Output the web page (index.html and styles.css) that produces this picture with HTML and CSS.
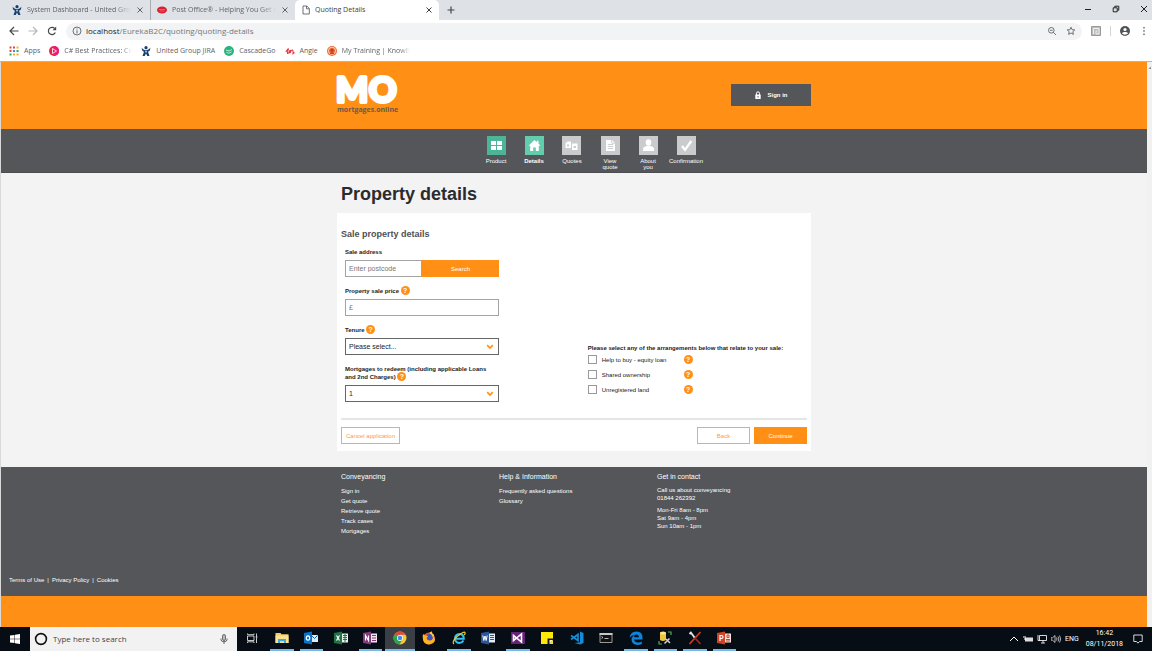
FILE: index.html
```html
<!DOCTYPE html>
<html lang="en">
<head>
<meta charset="utf-8">
<meta name="viewport" content="width=device-width, initial-scale=1">
<title>Quoting Details</title>
<link rel="stylesheet" href="styles.css">
</head>
<body>
<svg class="defs" aria-hidden="true">
  <symbol id="close" viewBox="0 0 8 8"><path d="M1.500 1.500l5 5M6.500 1.500l-5 5" stroke="currentColor"/></symbol>
  <symbol id="jira" viewBox="0 0 10 10"><circle cx="5" cy="1.700" r="1.600" fill="#17406f"/><path d="M.8 1.500C1.500 3.800 3.500 4 5 4s3.500-.2 4.200-2.500C9.500 4.500 8.500 5 7 5.800L8.500 10H6.300L5 7.600 3.700 10H1.500L3 5.800C1.500 5 .5 4.500.8 1.500z" fill="#17406f"/><circle cx="5" cy="5.600" r="1.100" fill="#a9bdd4"/></symbol>
  <symbol id="chevron" viewBox="0 0 8 6"><path d="M1.200 1.200L4 4l2.800-2.800" fill="none" stroke="#ff9015" stroke-width="1.700"/></symbol>
</svg>

<header class="browser">
  <div class="tabs">
    <div class="tab">
      <svg class="i10"><use href="#jira"/></svg>
      <span class="tab-title fade">System Dashboard - United Grou</span>
      <button class="plain" aria-label="Close tab"><svg class="i8"><use href="#close"/></svg></button>
    </div>
    <div class="tab divided">
      <svg class="i10" viewBox="0 0 10 10"><ellipse cx="5" cy="5" rx="5" ry="3.500" fill="#dc1f2e"/><path d="M2 4.500h6M2.500 6h5" stroke="#f08a90" stroke-width=".6"/></svg>
      <span class="tab-title fade">Post Office® - Helping You Get L</span>
      <button class="plain" aria-label="Close tab"><svg class="i8"><use href="#close"/></svg></button>
    </div>
    <div class="tab active">
      <svg class="i10" viewBox="0 0 10 10"><path d="M2 1h3.800L8.300 3.500V9H2zM5.500 1v2.800h2.800" fill="none" stroke="#5f6368" stroke-width=".9"/></svg>
      <span class="tab-title">Quoting Details</span>
      <button class="plain" aria-label="Close tab"><svg class="i8"><use href="#close"/></svg></button>
    </div>
    <button class="plain new-tab" aria-label="New tab"><svg class="i8" viewBox="0 0 8 8"><path d="M4 .5v7M.5 4h7" stroke="#45494d" stroke-width="1.200"/></svg></button>
    <div class="window-buttons">
      <button class="plain" aria-label="Minimise"><svg class="i8" viewBox="0 0 8 8"><path d="M1 4.500h6" stroke="#222"/></svg></button>
      <button class="plain" aria-label="Restore"><svg class="i8" viewBox="0 0 8 8"><path d="M1.200 2.800h4v4h-4zM2.800 2.500V1.200h4v4H5.500" fill="none" stroke="#222"/></svg></button>
      <button class="plain" aria-label="Close"><svg class="i8" viewBox="0 0 8 8"><path d="M1 1l6 6M7 1L1 7" stroke="#222"/></svg></button>
    </div>
  </div>
  <div class="toolbar">
    <button class="plain" aria-label="Back"><svg class="i10" viewBox="0 0 10 10"><path d="M9.500 5H1.200M5 1L1 5l4 4" fill="none" stroke="#45494d" stroke-width="1.200"/></svg></button>
    <button class="plain" aria-label="Forward"><svg class="i10" viewBox="0 0 10 10"><path d="M.5 5h8.300M5 1l4 4-4 4" fill="none" stroke="#b5b8bb" stroke-width="1.200"/></svg></button>
    <button class="plain" aria-label="Reload"><svg class="i10" viewBox="0 0 10 10"><path d="M8.300 6.400A3.600 3.600 0 1 1 7.600 2.400" fill="none" stroke="#45494d" stroke-width="1.200"/><path d="M9.200.5v3.700H5.500z" fill="#45494d"/></svg></button>
    <div class="address">
      <svg class="i10" viewBox="0 0 10 10"><circle cx="5" cy="5" r="4" fill="none" stroke="#5f6368" stroke-width=".9"/><path d="M5 4.400v3M5 2.500v1" stroke="#5f6368"/></svg>
      <span class="url">localhost<span>/EurekaB2C/quoting/quoting-details</span></span>
      <svg class="i10" viewBox="0 0 10 10"><circle cx="4.300" cy="4.300" r="2.800" fill="none" stroke="#5f6368" stroke-width=".9"/><path d="M6.300 6.300L9 9M3 4.300h2.600" stroke="#5f6368" stroke-width=".9"/></svg>
      <svg class="i10" viewBox="0 0 10 10"><path d="M5 1.200l1.100 2.500 2.700.2-2 1.800.6 2.700L5 7 2.600 8.400l.6-2.700-2-1.800 2.700-.2z" fill="none" stroke="#5f6368" stroke-width=".9"/></svg>
    </div>
    <svg class="i10" viewBox="0 0 10 10"><path d="M.5.5h9v9h-9z" fill="#bdbdbd" stroke="#999"/><path d="M2.500 8V2.500h5.500V8H5V5h1.500" fill="none" stroke="#eee"/></svg>
    <span class="rule"></span>
    <svg class="i10" viewBox="0 0 10 10"><circle cx="5" cy="5" r="5" fill="#505459"/><circle cx="5" cy="3.500" r="1.600" fill="#fff"/><path d="M1.900 7.200c1-1.600 5.200-1.600 6.200 0-1.500 1.900-4.700 1.900-6.200 0z" fill="#fff"/></svg>
    <svg class="i10" viewBox="0 0 10 10"><path d="M4.300 1h1.400v1.400H4.300zM4.300 4.300h1.400v1.400H4.300zM4.300 7.600h1.400V9H4.300z" fill="#5f6368"/></svg>
  </div>
  <nav class="bookmarks" aria-label="Bookmarks">
    <a href="#"><svg class="i10" viewBox="0 0 10 10"><path d="M.5.5h2v2h-2zM4 .5h2v2H4zM.5 4h2v2h-2z" fill="#e5483b"/><path d="M7.500.5h2v2h-2zM4 7.500h2v2H4z" fill="#f2b21b"/><path d="M4 4h2v2H4z" fill="#4285f4"/><path d="M7.500 4h2v2h-2zM.5 7.500h2v2h-2z" fill="#35a557"/><path d="M7.500 7.500h2v2h-2z" fill="#f2b21b"/></svg>Apps</a>
    <a href="#"><svg class="i10" viewBox="0 0 10 10"><circle cx="5" cy="5" r="5" fill="#e9264d"/><path d="M5 0a5 5 0 0 1 0 10z" fill="#ec1c74"/><path d="M3.500 2.500L7.500 5l-4 2.500z" fill="none" stroke="#fff" stroke-width=".8"/></svg><span class="fade mark">C# Best Practices: Co</span></a>
    <a href="#"><svg class="i10"><use href="#jira"/></svg>United Group JIRA</a>
    <a href="#"><svg class="i10" viewBox="0 0 10 10"><circle cx="5" cy="5" r="5" fill="#27b47e"/><path d="M2 4l3 1 3-1.500M2.500 6.500l2.500.7 2.500-1.200" fill="none" stroke="#bdebd8"/></svg>CascadeGo</a>
    <a href="#"><svg class="i10" viewBox="0 0 10 10"><path d="M.8 6L2.500 3.500Q4 1.500 3 4.500T2.800 7.500Q4.500 7 5 4M5.500 4L5 7Q6.500 3.500 7.500 4T8 7.500L9.500 6.500" fill="none" stroke="#e5343f" stroke-width="1.100"/></svg>Angie</a>
    <a href="#"><svg class="i10" viewBox="0 0 10 10"><circle cx="5" cy="5" r="5" fill="#ee6a30"/><circle cx="5" cy="4.800" r="3.600" fill="none" stroke="#fff" stroke-width=".7"/><circle cx="5" cy="4.300" r="1.600" fill="#b9441b"/><path d="M2.800 8c.5-2 3.900-2 4.400 0z" fill="#b9441b"/></svg><span class="fade mark">My Training | KnowBe</span></a>
  </nav>
</header>

<div class="viewport">
  <div class="page">
    <header class="brand">
      <div class="container brand-row">
        <a href="#" class="logo" aria-label="MO mortgages online">
          <svg class="logo-mark" viewBox="0 0 60 30"><text x="-1" y="27">M</text><text x="32" y="27">O</text></svg>
          <span class="logo-name">mortgages.online</span>
        </a>
        <button class="sign-in"><svg class="lock" viewBox="0 0 6 8"><path d="M1.500 4V2.300a1.500 1.500 0 0 1 3 0V4" fill="none" stroke="#fff"/><path d="M.3 3.500h5.400V8H.3z" fill="#fff"/><path d="M3 5v1.500" stroke="#55565a"/></svg>Sign in</button>
      </div>
    </header>

    <nav class="steps" aria-label="Progress">
      <ol class="container">
        <li class="done"><svg viewBox="0 0 19 19"><path d="M4 5h5v4H4zM10 5h5v4h-5zM4 10h5v4H4zM10 10h5v4h-5z" fill="#fff"/></svg>Product</li>
        <li class="current"><svg viewBox="0 0 19 19"><path d="M9.500 4L3.500 9.800h1.700V15h3v-3.500h2.600V15h3V9.800h1.700L13.500 7.800V4.800h-1.600v1.500z" fill="#fff"/></svg>Details</li>
        <li><svg viewBox="0 0 19 19"><path d="M3.500 7.500l2-2H9V12H3.500z" fill="#fff"/><path d="M10 7.500h5.500V14H10z" fill="#fff"/><path d="M5 8.500h2v2H5zM11.500 10h2.500v2h-2.500z" fill="#c9cbcc"/></svg>Quotes</li>
        <li><svg viewBox="0 0 19 19"><path d="M5 4h6l3 3v8H5z" fill="#fff"/><path d="M6.800 8.500h5.400M6.800 10.500h5.400M6.800 12.500h5.400M10.800 4v3.200H14" fill="none" stroke="#c9cbcc" stroke-width=".9"/></svg>View quote</li>
        <li><svg viewBox="0 0 19 19"><ellipse cx="9.500" cy="6.500" rx="2.800" ry="3.300" fill="#fff"/><path d="M4 15v-2.200q0-1.800 3.500-2.800h4q3.500 1 3.500 2.800V15z" fill="#fff"/></svg>About you</li>
        <li><svg viewBox="0 0 19 19"><path d="M5 10l3 3.800L14.300 5" fill="none" stroke="#fff" stroke-width="2.300"/></svg>Confirmation</li>
      </ol>
    </nav>

    <main class="container">
      <h1>Property details</h1>
      <form class="card">
        <h2>Sale property details</h2>
        <div class="columns">
          <div class="fields">
            <div class="field">
              <label for="postcode">Sale address</label>
              <div class="joined"><input id="postcode" class="control" type="text" placeholder="Enter postcode"><button type="button" class="solid">Search</button></div>
            </div>
            <div class="field">
              <label for="price">Property sale price <span class="help">?</span></label>
              <input id="price" class="control" type="text" placeholder="£">
            </div>
            <div class="field">
              <label for="tenure">Tenure <span class="help">?</span></label>
              <div class="pick"><select id="tenure" class="control"><option>Please select...</option><option>Freehold</option><option>Leasehold</option></select><svg><use href="#chevron"/></svg></div>
            </div>
            <div class="field">
              <label for="redeem">Mortgages to redeem (including applicable Loans and&nbsp;2nd Charges) <span class="help">?</span></label>
              <div class="pick"><select id="redeem" class="control"><option>1</option><option>2</option><option>3</option></select><svg><use href="#chevron"/></svg></div>
            </div>
          </div>
          <fieldset>
            <legend>Please select any of the arrangements below that relate to your sale:</legend>
            <div class="check"><input type="checkbox" id="help-buy"><label for="help-buy">Help to buy - equity loan</label><span class="help">?</span></div>
            <div class="check"><input type="checkbox" id="shared"><label for="shared">Shared ownership</label><span class="help">?</span></div>
            <div class="check"><input type="checkbox" id="unregistered"><label for="unregistered">Unregistered land</label><span class="help">?</span></div>
          </fieldset>
        </div>
        <div class="actions">
          <button type="button" class="outline cancel">Cancel application</button>
          <button type="button" class="outline">Back</button>
          <button type="submit" class="solid">Continue</button>
        </div>
      </form>
    </main>

    <footer class="site-footer">
      <div class="container footer-columns">
        <section>
          <h3>Conveyancing</h3>
          <ul><li><a href="#">Sign in</a></li><li><a href="#">Get quote</a></li><li><a href="#">Retrieve quote</a></li><li><a href="#">Track cases</a></li><li><a href="#">Mortgages</a></li></ul>
        </section>
        <section>
          <h3>Help &amp; Information</h3>
          <ul><li><a href="#">Frequently asked questions</a></li><li><a href="#">Glossary</a></li></ul>
        </section>
        <section class="contact">
          <h3>Get in contact</h3>
          <p>Call us about conveyancing<br>01844 262392</p>
          <p>Mon-Fri 8am - 8pm<br>Sat 9am - 4pm<br>Sun 10am - 1pm</p>
        </section>
      </div>
      <div class="legal"><a href="#">Terms of Use</a><span>|</span><a href="#">Privacy Policy</a><span>|</span><a href="#">Cookies</a></div>
    </footer>
    <div class="band"></div>
  </div>
  <div class="scrollbar"><svg viewBox="0 0 5 4"><path d="M1.500 3L4 .5V3z" fill="#888"/></svg></div>
</div>

<footer class="taskbar">
  <button class="plain start" aria-label="Start"><svg class="i10" viewBox="0 0 10 10"><path d="M0 1.500L4.500.9v3.800H0zM5 .8L10 0v4.700H5zM0 5.200h4.500V9L0 8.400zM5 5.200h5V10l-5-.8z" fill="#fff"/></svg></button>
  <div class="search">
    <svg class="ring" viewBox="0 0 14 14"><circle cx="7" cy="7" r="5.400" fill="none" stroke="#111" stroke-width="1.600"/></svg>
    <input type="text" placeholder="Type here to search" aria-label="Type here to search">
    <svg class="i10" viewBox="0 0 10 10"><rect x="3.500" y=".5" width="3" height="6" rx="1.500" fill="#bbb" stroke="#444" stroke-width=".7"/><path d="M2 4.500v1.200q0 2 3 2t3-2V4.500M5 7.700V10" fill="none" stroke="#444" stroke-width=".8"/></svg>
  </div>
  <button class="plain app view" aria-label="Task view"><svg viewBox="0 0 14 14"><path d="M2.500 5h6.500v4.500H2.500zM2.500 2.500v1.200H9V2.500M2.500 12v-1.200H9V12M11.500 2.500V5M11.500 7v5" fill="none" stroke="#ddd" stroke-width=".9"/><path d="M10.800 5.200h1.500v1.500h-1.500z" fill="#fff"/></svg></button>
  <div class="apps">
    <button class="plain app open" aria-label="File Explorer"><svg viewBox="0 0 14 14"><path d="M.5 2h5l1 1.200h7V12H.5z" fill="#f5cf62"/><path d="M.5 4.500h13V12H.5z" fill="#fbe38f"/><path d="M3 12V8h8v4H9v-1.800H5V12z" fill="#41a8e0"/></svg></button>
    <button class="plain app open" aria-label="Outlook"><svg viewBox="0 0 14 14"><path d="M7 4h7v7H7z" fill="#dcecf8"/><path d="M7.500 4.500L10.500 7.500l3-3" fill="none" stroke="#0a6ab9"/><path d="M0 2l8-1.500v13L0 12z" fill="#0b72c6"/><ellipse cx="4" cy="7" rx="1.700" ry="2.200" fill="none" stroke="#fff" stroke-width="1.200"/></svg></button>
    <button class="plain app" aria-label="Excel"><svg viewBox="0 0 14 14"><path d="M7.500 2.500H14v9H7.500z" fill="#e7f2ea"/><path d="M9 4.500h4M9 6.500h4M9 8.500h4M11 3v8" stroke="#217346"/><path d="M0 2l8-1.500v13L0 12z" fill="#217346"/><path d="M2.500 4.500l3 5M5.500 4.500l-3 5" stroke="#fff" stroke-width="1.200"/></svg></button>
    <button class="plain app open" aria-label="OneNote"><svg viewBox="0 0 14 14"><path d="M7.500 2.500H14v9H7.500z" fill="#f3e4f0"/><path d="M9 4.500h4M9 7h4M9 9.500h4" stroke="#80397b"/><path d="M0 2l8-1.500v13L0 12z" fill="#80397b"/><path d="M2.500 9.500v-5l3 5v-5" fill="none" stroke="#fff" stroke-width="1.200"/></svg></button>
    <button class="plain app open focus" aria-label="Chrome"><svg viewBox="0 0 14 14"><circle cx="7" cy="7" r="6.500" fill="#f8c927"/><path d="M7 7L1.400 3.700A6.500 6.500 0 0 1 12.600 3.700H7z" fill="#e04a3b"/><path d="M1.400 3.700A6.500 6.500 0 0 0 6.500 13.500L9.500 8.500 7 7z" fill="#2ba24c"/><circle cx="7" cy="7" r="3" fill="#fff"/><circle cx="7" cy="7" r="2.300" fill="#4688f1"/></svg></button>
    <button class="plain app" aria-label="Firefox"><svg viewBox="0 0 14 14"><circle cx="7" cy="7.500" r="6" fill="#f3521e"/><circle cx="7.500" cy="6.500" r="3.500" fill="#3b55c4"/><path d="M1 3l2 1.500q2-.5 3 1L4.500 7q1 3 4 2.500Q12 8.500 11 4q4 5 0 8-5 3-8.800-.5Q0 8 1 3z" fill="#ffb31c"/><path d="M7 2q2-2 3-1.500Q9.500 2 12 4l-1 3Q10 3 7 2z" fill="#ffcf33"/></svg></button>
    <button class="plain app open" aria-label="Internet Explorer"><svg viewBox="0 0 14 14"><path d="M11.500 9.500Q10 12 7.500 12 3 11.500 3 7.500T7.500 3q4.300.2 4.300 4.800H4" fill="none" stroke="#35c0f0" stroke-width="2"/><path d="M2 13Q-.5 11 5 5.500 12 0 13 1.500q.5 1-.8 2.700" fill="none" stroke="#f2c834" stroke-width="1.200"/></svg></button>
    <button class="plain app" aria-label="Word"><svg viewBox="0 0 14 14"><path d="M7.500 2.500H14v9H7.500z" fill="#e3ebf7"/><path d="M9 4.500h4M9 6.500h4M9 8.500h4" stroke="#2b579a"/><path d="M0 2l8-1.500v13L0 12z" fill="#2b579a"/><path d="M1.800 4.500l1 5L4 5l1.200 4.500 1-5" fill="none" stroke="#fff"/></svg></button>
    <button class="plain app open" aria-label="Visual Studio"><svg viewBox="0 0 14 14"><path d="M0 1h14v12H0z" fill="#68217a"/><path d="M2.500 4.500v5l8-6.500v8z" fill="none" stroke="#fff" stroke-width="1.600"/></svg></button>
    <button class="plain app" aria-label="Sticky Notes"><svg viewBox="0 0 14 14"><path d="M1 1h12v12H1z" fill="#ffe70a"/><path d="M7.500 7.500H13V9l-3.500 4h-2z" fill="#171b1d"/><path d="M9.500 13V9H13z" fill="#fff8a0"/></svg></button>
    <button class="plain app" aria-label="Visual Studio Code"><svg viewBox="0 0 14 14"><path d="M10 .5l3.500 1.500v10L10 13.500 4.500 12l5.500-.8z" fill="#178bd6"/><path d="M1 4.500l7 5v-6l-7 5" fill="none" stroke="#178bd6" stroke-width="1.700"/></svg></button>
    <button class="plain app" aria-label="Command Prompt"><svg viewBox="0 0 14 14"><path d="M1 2.500h12v9H1z" fill="#111" stroke="#999"/><path d="M.5 2h13v2H.5z" fill="#c7c7c7"/><path d="M2.500 5.500l1.500 1-1.500 1M5.500 7.500h4" fill="none" stroke="#ddd" stroke-width=".8"/></svg></button>
    <button class="plain app open" aria-label="Edge"><svg viewBox="0 0 14 14"><path d="M.5 6.500Q1.500.5 7.500.5t6 6V8.500H5q.5 3 4 3 2 0 3.800-1v2.500q-2 1-4.500 1Q3 13.500 2.500 9 2.500 5.500 6 4 2.500 4 .5 6.500zM5.200 6.200h4.600Q9.800 3.500 7.500 3.500T5.200 6.200z" fill="#0b84dd"/></svg></button>
    <button class="plain app open" aria-label="SQL Server Management Studio"><svg viewBox="0 0 14 14"><path d="M2 2v7q3 2 6 0V2z" fill="#edc53b"/><ellipse cx="5" cy="2" rx="3" ry="1.500" fill="#fbe587"/><path d="M10 1h3v3M1 10v3h3" fill="none" stroke="#4cae50" stroke-width="1.200"/><path d="M6.500 12.500l5-5M8 8l4 4" stroke="#ccc" stroke-width="1.600"/></svg></button>
    <button class="plain app open" aria-label="Tools"><svg viewBox="0 0 14 14"><path d="M12.500 1L1.500 13" stroke="#d8381e" stroke-width="1.800"/><path d="M5.500 5.500L12.500 13" stroke="#9b2a1b" stroke-width="1.800"/><path d="M2.500 1l4 5.500M1.500 3l2-2" stroke="#e8e8e8" stroke-width="1.800"/></svg></button>
    <button class="plain app open" aria-label="PowerPoint"><svg viewBox="0 0 14 14"><path d="M7.500 2.500H14v9H7.500z" fill="#f8e3dc"/><path d="M9 8.500h4M9 10h4M10 4h2v2.500h-2z" fill="none" stroke="#d04423"/><path d="M0 2l8-1.500v13L0 12z" fill="#d04423"/><path d="M3 10V4.500h1.500q1.500 0 1.500 1.500T4.500 7.500H3" fill="none" stroke="#fff" stroke-width="1.200"/></svg></button>
  </div>
  <div class="tray">
    <svg class="i10" viewBox="0 0 10 10"><path d="M1 7l4-4 4 4" fill="none" stroke="#fff"/></svg>
    <svg class="i10" viewBox="0 0 10 10"><path d="M2 3.500h8v4H2z" fill="#ddd"/><path d="M0 3h3M1 5h2" stroke="#fff"/></svg>
    <svg class="i10" viewBox="0 0 10 10"><path d="M2.500 1.500h7v5h-7zM6 6.500V9M4 9h4M1 1v5.500h2" fill="none" stroke="#eee" stroke-width=".9"/></svg>
    <svg class="i10" viewBox="0 0 10 10"><path d="M0 3.800h1.500L4 1.500v7L1.500 6.200H0zM5.500 3.500q1 1.500 0 3M7 2.500q1.800 2.500 0 5M8.500 1.500q2.500 3.500 0 7" fill="none" stroke="#ddd" stroke-width=".8"/></svg>
    <span>ENG</span>
    <span class="clock">16:42<br>08/11/2018</span>
    <svg class="i10" viewBox="0 0 10 10"><path d="M.8 1h8.400v6.500H6.500L5 9.200 3.500 7.500H.8z" fill="none" stroke="#eee" stroke-width=".9"/></svg>
  </div>
</footer>
</body>
</html>
```
FILE: styles.css
```css
* { box-sizing: border-box; }

body {
  margin: 0;
  min-height: 100vh;
  display: flex;
  flex-direction: column;
  font: 6px/8px "Liberation Sans", Arial, sans-serif;
  color: #222;
}

h1, h2, h3, p, ul, ol, fieldset { margin: 0; padding: 0; border: 0; }
ul, ol { list-style: none; }
a { color: inherit; text-decoration: none; }
button, input, select { font: inherit; color: inherit; margin: 0; min-width: 0; }
svg { display: block; flex: none; }
.defs { position: absolute; width: 0; height: 0; }
.plain { background: none; border: 0; padding: 0; display: grid; place-items: center; }
.i8 { width: 8px; height: 8px; }
.i10 { width: 10px; height: 10px; }

/* browser window */
.browser { font: 7px/10px "Open Sans", sans-serif; color: #5f6368; border-bottom: 1px solid #b9b4ad; }
.tabs { display: flex; height: 20px; background: #dee1e6; }
.tab { display: flex; align-items: center; gap: 5px; width: 144px; padding: 0 6px 0 12px; }
.tab.divided { padding-left: 6px; }
.tab:first-child { width: 151px; border-right: 1px solid #a9adb2; }
.tab.active { background: #fff; border-radius: 5px 5px 0 0; padding-left: 6px; gap: 4px; color: #3c4043; }
.tab-title { flex: 1; overflow: hidden; white-space: nowrap; }
.fade { overflow: hidden; white-space: nowrap; mask-image: linear-gradient(to right, #000 85%, transparent); }
.new-tab { width: 24px; }
.window-buttons { display: flex; gap: 20px; margin-left: auto; padding-right: 4px; height: 17px; }
.toolbar { display: flex; align-items: center; gap: 9px; height: 22px; padding: 0 3px 0 9px; }
.address { flex: 1; display: flex; align-items: center; gap: 9px; height: 17px; border-radius: 9px; background: #f1f3f4; padding: 0 6px; }
.toolbar .address > :first-child { margin-right: -5px; }
.url { flex: 1; font-size: 8px; color: #202124; }
.url span { color: #74787c; }
.rule { width: 1px; height: 10px; background: #d5d5d5; }
.bookmarks { display: flex; gap: 9px; height: 19px; padding: 0 9px 2px; align-items: center; }
.bookmarks a { display: flex; align-items: center; gap: 5px; }
.mark { width: 68px; }

/* site */
.viewport { flex: 1; display: flex; }
.page { flex: 1; display: flex; flex-direction: column; border-left: 1px solid #d9d9d9; background: #f3f3f3; }
.scrollbar { width: 5px; background: #f1f1f1; padding-top: 4px; }
.container { width: 100%; max-width: 474px; margin: 0 auto; }
.brand { background: #ff9015; padding: 13px 0 15px; }
.brand-row { display: flex; justify-content: space-between; align-items: flex-start; }
.logo { display: grid; }
.logo-mark { width: 60px; height: 30px; overflow: visible; font: 700 34px/30px Lato, sans-serif; fill: #fff; stroke: #fff; stroke-width: 4px; stroke-linejoin: round; }
.logo-name { font: 700 7px/9px "Open Sans", sans-serif; color: #6a5a48; }
.sign-in { display: flex; align-items: center; justify-content: center; gap: 7px; width: 80px; height: 22px; margin-top: 9px; border: 0; background: #55565a; color: #fff; font-weight: bold; }
.lock { width: 6px; height: 8px; }
.steps { background: #55565a; border-bottom: 1px solid #4c4d50; min-height: 44px; color: #fff; }
.steps ol { display: flex; padding: 7px 0 2px 140px; }
.steps li { width: 38px; padding: 0 8px; display: grid; justify-items: center; place-content: start center; gap: 3px; text-align: center; line-height: 6px; }
.steps svg { width: 19px; height: 19px; background: #c9cbcc; }
.steps .done svg { background: #4cb597; }
.steps .current svg { background: #63ccad; }
.steps .current { font-weight: bold; }

h1 { font-size: 18px; line-height: 22px; padding: 10px 4px 8px; color: #2b2b2e; }
.card { background: #fff; padding: 14px 4px 7px; }
h2 { font-size: 9px; line-height: 14px; color: #4f5055; }
.columns { display: grid; grid-template-columns: 53fr 47fr; padding: 7px 4px 16px; }
.fields { display: grid; gap: 10px; width: 154px; }
.field { display: grid; gap: 4px; }
.field label, legend { font-weight: bold; }
.help { display: inline-block; text-align: center; width: 9px; height: 9px; margin: -1px 0 0; border-radius: 50%; background: #ff9015; color: #fff; font-weight: bold; font-size: 7px; line-height: 9px; vertical-align: top; }
.control { width: 100%; height: 17px; border: 1px solid #a3a3a3; border-radius: 0; background: #fff; padding: 0 3px; font-size: 7px; line-height: 15px; }
.control::placeholder { color: #777; opacity: 1; }
.joined { display: grid; grid-template-columns: 1fr 1fr; }
.solid { height: 17px; border: 0; background: #ff9015; color: #fff; }
.outline { height: 17px; border: 1px solid #ffa84a; background: #fff; color: #ff9c38; }
.pick { position: relative; }
select.control { appearance: none; border-color: #666; display: block; }
.pick svg { position: absolute; right: 5px; top: 6px; width: 8px; height: 6px; pointer-events: none; }
fieldset { align-self: end; padding-bottom: 5px; }
legend { padding: 0; white-space: nowrap; }
.check { display: grid; grid-template-columns: 10px 78px 9px; gap: 4px; align-items: center; height: 15px; white-space: nowrap; }
.check input { appearance: none; width: 9px; height: 9px; border: 1px solid #999; background: #fff; }
.actions { display: flex; gap: 4px; border-top: 2px solid #e6e6e6; padding-top: 7px; }
.actions button { width: 53px; padding: 0; }
.actions .cancel { width: 59px; margin-right: auto; }

.site-footer { margin-top: 16px; background: #55565a; color: #fff; flex: 1; display: flex; flex-direction: column; padding-top: 5px; }
.footer-columns { display: grid; grid-template-columns: repeat(3, 158px); padding: 0 4px; }
h3 { font-size: 7px; font-weight: normal; line-height: 10px; margin-bottom: 4px; }
.site-footer li { line-height: 10px; }
.contact p { margin-bottom: 4px; }
.legal { display: flex; gap: 3px; margin-top: auto; padding: 0 8px 12px; }
.band { height: 31px; background: #ff9015; }

/* taskbar */
.taskbar { display: flex; height: 24px; background: #070d14; color: #fff; font: 7px/10px "Open Sans", sans-serif; }
.start { width: 30px; }
.search { display: flex; align-items: center; gap: 5px; width: 207px; padding: 0 8px 0 4px; background: #f2f2f2; }
.ring { width: 14px; height: 14px; }
.search input { flex: 1; border: 0; padding: 0; background: none; font-size: 8px; color: #333; }
.search input::placeholder { color: #444; opacity: 1; }
.apps { display: grid; grid-template-columns: repeat(16, 1fr); width: 472px; }
.app { border-bottom: 2px solid transparent; margin: 0 3px; }
.app.open { border-color: #76b9ed; }
.app.focus { background: #3a3f45; margin: 0; }
.app svg { width: 14px; height: 14px; }
.view { width: 24px; }
.tray { display: flex; align-items: center; gap: 4px; margin-left: auto; padding-right: 9px; font: 7px/11px Roboto, sans-serif; }
.clock { text-align: center; padding: 0 6px 0 3px; }
```
